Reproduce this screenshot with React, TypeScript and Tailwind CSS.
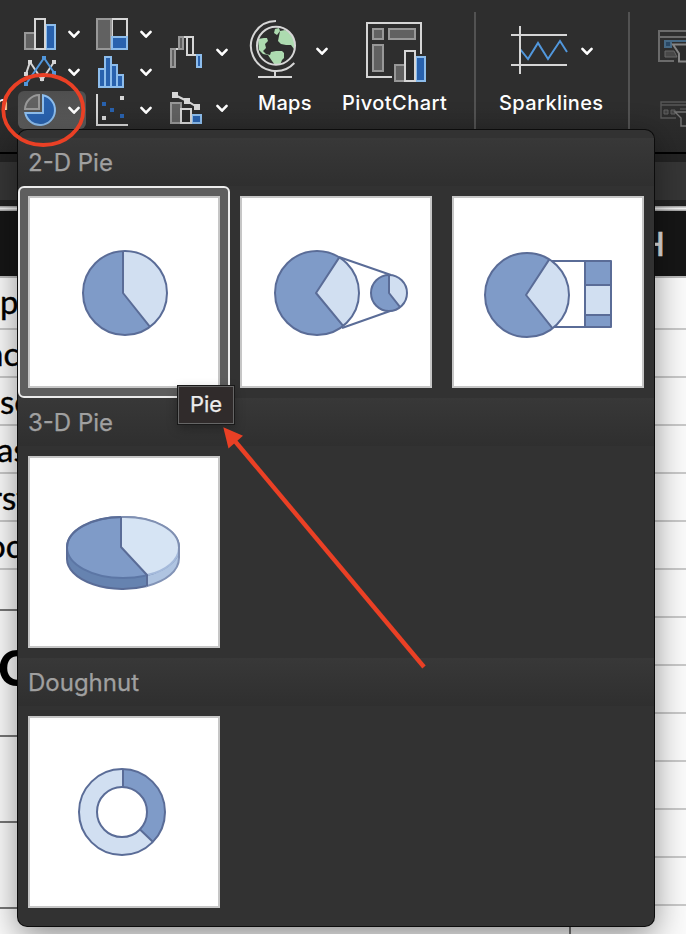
import type { ReactNode } from "react";

function Chevron() {
  return (
    <svg className="h-3 w-3.5 shrink-0" viewBox="0 0 14 12" fill="none" stroke="#fff" strokeWidth="2.6" strokeLinecap="round" strokeLinejoin="round">
      <path d="M2.4 3.9 7 8.7l4.6-4.8" />
    </svg>
  );
}

function Icon({ box, className, children }: { box: string; className: string; children: ReactNode }) {
  return (
    <svg className={"block shrink-0 overflow-visible " + className} viewBox={box} fill="none" strokeWidth="2">
      {children}
    </svg>
  );
}

function ChartButton({ box, tall, active, children }: { box: string; tall?: boolean; active?: boolean; children: ReactNode }) {
  return (
    <div
      className={
        "flex items-center justify-between rounded-md pl-1.5 pr-[5px] " +
        (tall ? "h-14 w-[70px] " : "h-[38px] w-[68px] ") +
        (active ? "bg-linear-to-b from-[#4e4e4e] to-[#5c5c5c]" : "")
      }
    >
      <Icon box={box} className="h-8 w-8">{children}</Icon>
      <Chevron />
    </div>
  );
}

const GRAY = { fill: "#616161", stroke: "#989898" };
const LIGHT = { fill: "#2b2b2b", stroke: "#d6d6d6" };
const BLUE = { fill: "#2962ae", stroke: "#8dbdec" };

function Ribbon() {
  return (
    <div className="flex h-[154px] shrink-0 border-b-2 border-black bg-linear-to-b from-[#2e2e2e] from-70% to-[#282828] text-[20px] font-medium leading-6 text-white">
      <div className="flex w-[18px] shrink-0 items-start justify-start pt-[91px]">
        <span className="-ml-[4px]">n</span>
      </div>
      <div className="w-[68px] shrink-0 pt-[15px]">
        <ChartButton box="24 18 32 32">
          <rect x="25" y="33" width="10" height="16" {...GRAY} />
          <rect x="46" y="25" width="9" height="24" {...BLUE} />
          <rect x="35" y="19" width="10" height="30" {...LIGHT} />
        </ChartButton>
        <ChartButton box="24 56 32 32">
          <path d="M26 74 30 62 42 80 54 62" stroke="#d6d6d6" />
          <path d="M26 84 44 58 55 74" stroke="#5197dc" />
          <path d="M24 72h4v4h-4zM28 60h4v4h-4zM40 77h4v4h-4zM52 60h4v4h-4z" fill="#d6d6d6" />
          <path d="M24 82h4v4h-4zM42 56h4v4h-4zM52 71h4v4h-4z" fill="#5197dc" />
        </ChartButton>
        <ChartButton box="24 94 32 32" active>
          <path d="M43 95.3A15 15 0 1 1 25.3 113H43Z" {...BLUE} />
          <path d="M39 95A14.5 14.5 0 0 0 25 109H39Z" {...GRAY} />
        </ChartButton>
      </div>
      <div className="ml-1 w-[68px] shrink-0 pt-[15px]">
        <ChartButton box="96 18 32 32">
          <rect x="112" y="19" width="15" height="30" {...LIGHT} />
          <rect x="97" y="19" width="14" height="30" {...GRAY} />
          <rect x="112" y="37" width="15" height="12" {...BLUE} />
        </ChartButton>
        <ChartButton box="96 56 32 32">
          <rect x="99" y="69" width="6" height="18" {...BLUE} />
          <rect x="111" y="65" width="6" height="22" {...BLUE} />
          <rect x="117" y="75" width="6" height="12" {...BLUE} />
          <rect x="105" y="57" width="6" height="30" {...BLUE} />
        </ChartButton>
        <ChartButton box="96 94 32 32">
          <path d="M97 94v31h31" stroke="#d6d6d6" />
          <path d="M120 96h4v4h-4zM102 116h4v4h-4z" fill="#d6d6d6" />
          <path d="M102 102h4v4h-4zM110 108h4v4h-4zM120 114h4v4h-4z" fill="#2962ae" />
        </ChartButton>
      </div>
      <div className="ml-1.5 w-[70px] shrink-0 pt-6">
        <ChartButton box="170 36 32 32" tall>
          <path d="M175 49h5M194 55h3" stroke="#d6d6d6" />
          <rect x="171" y="49" width="4" height="18" {...GRAY} />
          <rect x="179" y="37" width="4" height="12" {...GRAY} />
          <path d="M184 37h4" stroke="#d6d6d6" />
          <rect x="187" y="37" width="6" height="18" {...LIGHT} />
          <rect x="197" y="55" width="4" height="12" {...BLUE} />
        </ChartButton>
        <ChartButton box="170 92 32 32" tall>
          <rect x="171" y="103" width="10" height="20" {...GRAY} />
          <rect x="192" y="115" width="9" height="8" {...BLUE} />
          <rect x="181" y="109" width="10" height="14" {...LIGHT} />
          <path d="M175 95 187 101 197 107" stroke="#d6d6d6" />
          <path d="M172 92h6v6h-6zM184 98h6v6h-6zM194 104h6v6h-6z" fill="#d6d6d6" />
        </ChartButton>
      </div>
      <div className="ml-3.5 w-[86px] shrink-0">
        <div className="flex h-[91px] items-start justify-between pr-[5px] pt-[18px]">
          <Icon box="248 18 50 62" className="h-[62px] w-[50px]">
            <path
              d="M275 29l4-1 1 3-3 4-3-2zM280 31l5-1 5 3 4 5 1 8-1 3-3-4-3 0-2 0-5-1-3-3 1-5zM258 39l6-1 3 0 1 3-3 3 1 4-3 3 3 3 4 1 1-3 5-1 6 0 2 2 0 5-2 2-2 5-5 0-3-4-4-6-5-1-4-4z"
              fill="#addbb0"
            />
            <circle cx="276" cy="45.7" r="19" stroke="#d6d6d6" />
            <path d="M276 21A25 25 0 1 0 294.3 63M275 71v6M258 77h34" stroke="#d6d6d6" />
          </Icon>
          <div className="pt-[27px]"><Chevron /></div>
        </div>
        <div className="pl-2.5 tracking-[0.25px]">Maps</div>
      </div>
      <div className="ml-2 w-[108px] shrink-0 whitespace-nowrap">
        <div className="h-[91px] pl-6 pt-[22px]">
          <Icon box="366 22 60 60" className="h-[60px] w-[60px]">
            <path d="M392 77H367V23h54v31" stroke="#d6d6d6" />
            <rect x="373" y="29" width="10" height="10" {...GRAY} />
            <rect x="389" y="29" width="26" height="10" {...GRAY} />
            <rect x="373" y="45" width="10" height="26" {...GRAY} />
            <rect x="395" y="65" width="10" height="16" {...GRAY} />
            <rect x="416" y="57" width="9" height="24" {...BLUE} />
            <rect x="405" y="51" width="10" height="30" {...LIGHT} />
          </Icon>
        </div>
        <div className="tracking-[0.45px]">PivotChart</div>
      </div>
      <div className="ml-6 mt-3 w-0.5 shrink-0 bg-[#525252]" />
      <div className="w-[152px] shrink-0">
        <div className="flex h-[91px] items-start pl-[35px] pt-[26px]">
          <Icon box="511 26 56 48" className="h-12 w-14">
            <path d="M520 49 528 59 538 43 548 59 560 41 567 52" stroke="#5197dc" />
            <path d="M520 26v48M511 35h56M511 65h56" stroke="#d6d6d6" />
          </Icon>
          <div className="pl-[13px] pt-[19px]"><Chevron /></div>
        </div>
        <div className="pl-[23px] tracking-[0.38px]">Sparklines</div>
      </div>
      <div className="mt-3 w-0.5 shrink-0 bg-[#525252]" />
      <div className="ml-7 flex w-7 shrink-0 flex-col gap-[39px] overflow-hidden pt-[30px]">
        <Icon box="658 30 32 32" className="h-8 w-8">
          <path d="M659 31h40M659 37h40M659 30v32M658 61h16" stroke="#6b6b6b" />
          <path d="M670 41h35" stroke="#466985" />
          <path d="M665 41h6v6h-6z" fill="#294865" stroke="#466985" />
          <path d="M665 51h9l3 6h-12z" fill="#484848" stroke="#686868" strokeWidth="1" />
          <path d="M673 45h24l-9 9v8h-9v-8z" transform="translate(0 -0.5)" fill="#2b2b2b" stroke="#858585" />
        </Icon>
        <Icon box="660 101 28 26" className="ml-0.5 h-[26px] w-7">
          <path d="M676 118h-15v-16h30M661 105h30" stroke="#575757" strokeWidth="1.4" />
          <path d="M664 110h4v4h-4zM671 110h4v4h-4zM680 109h6" fill="#414141" stroke="#606060" strokeWidth="1" />
          <path d="M675 112h20l-7 6v8h-7v-8z" fill="#2b2b2b" stroke="#737373" strokeWidth="1.4" />
        </Icon>
      </div>
    </div>
  );
}

function SheetRow({ text, shift = "" }: { text: string; shift?: string }) {
  return (
    <div className="h-12 border-b-2 border-[#c9c9c9]">
      <span className={"block whitespace-nowrap text-[33px] leading-[46px] text-black [-webkit-text-stroke:0.4px_#000] " + shift}>{text}</span>
    </div>
  );
}

function Sheet() {
  return (
    <div className="flex min-h-0 flex-1 flex-col font-['Lato',sans-serif]">
      <div className="h-2 shrink-0 bg-[#232323]" />
      <div className="h-[38px] shrink-0 bg-[#363636]" />
      <div className="h-1.5 shrink-0 bg-[#232323]" />
      <div className="h-[5px] shrink-0 bg-linear-to-b from-[#999] via-[#f2f2f2] to-[#999]" />
      <div className="flex h-[65px] shrink-0 items-center justify-end bg-[#161616] pr-[21px] text-[33px] text-[#e2e2e2] [-webkit-text-stroke:0.7px_#e2e2e2]">H</div>
      <div className="flex flex-1 justify-between border-t-2 border-[#bbb] bg-[#fbfbfb]">
        <div className="w-[18px] shrink-0">
          <div className="h-[52px] border-b-2 border-[#c9c9c9] text-[33px] leading-[46px] [-webkit-text-stroke:0.4px_#000]">p</div>
          <SheetRow text="nc" shift="-ml-[15px]" />
          <SheetRow text="se" />
          <SheetRow text="as" shift="-ml-[3px]" />
          <SheetRow text="rst" shift="-ml-[10px]" />
          <SheetRow text="oc" shift="-ml-[13px]" />
          <div className="h-[41px] border-b-2 border-[#777]" />
          <div className="h-[126px] border-b-2 border-[#777] pt-[26px] text-[49px] font-black leading-[60px]">
            <span className="-ml-[2px]">C</span>
          </div>
          <div className="h-[86px] border-b-2 border-[#777]" />
          <div className="h-[86px] border-b-2 border-[#777]" />
        </div>
        <div className="ml-[551px] w-0.5 shrink-0 bg-[#777]" />
        <div className="flex-1">
          <div className="h-[52px] border-b-2 border-[#c9c9c9]" />
          {Array.from({ length: 12 }, (_, i) => (
            <SheetRow key={i} text="" />
          ))}
        </div>
      </div>
    </div>
  );
}

const EDGE = { stroke: "#5a6c97", strokeLinejoin: "round" as const };

function PieDisc({ cx, cy, r, px, py, from, to }: { cx: number; cy: number; r: number; px: number; py: number; from: number; to: number }) {
  const at = (deg: number) => {
    const a = (deg * Math.PI) / 180;
    return `${(cx + r * Math.sin(a)).toFixed(2)} ${(cy - r * Math.cos(a)).toFixed(2)}`;
  };
  return (
    <g>
      <circle cx={cx} cy={cy} r={r} fill="#7f9bc8" />
      <path d={`M${px} ${py}L${at(from)}A${r} ${r} 0 0 1 ${at(to)}Z`} fill="#d1dff1" />
      <path d={`M${at(from)}L${px} ${py}L${at(to)}`} fill="none" {...EDGE} />
      <circle cx={cx} cy={cy} r={r} fill="none" {...EDGE} />
    </g>
  );
}

function Tile({ selected, box, children }: { selected?: boolean; box: string; children: ReactNode }) {
  return (
    <div className={"h-[212px] w-[212px] shrink-0 rounded-md " + (selected ? "border-2 border-[#ededed] bg-[#5e5e5e] p-2" : "p-2.5")}>
      <div className="h-48 w-48 border-2 border-[#c6c6c6] bg-white">
        <svg className="block h-[188px] w-[188px]" viewBox={box} strokeWidth="2">{children}</svg>
      </div>
    </div>
  );
}

function Heading({ children }: { children: ReactNode }) {
  return (
    <div className="flex h-12 items-center bg-linear-to-b from-[#383838] to-[#2f2f2f] pl-2.5 pt-0.5 text-[24px] text-[#a0a0a0] [-webkit-text-stroke:0.25px_#a0a0a0]">
      {children}
    </div>
  );
}

function Gallery() {
  return (
    <div className="absolute left-[18px] top-[130px] h-[796px] w-[636px] overflow-hidden rounded-[9px] bg-[#323232] pt-2 shadow-[0_0_0_1px_#0c0c0c,0_10px_34px_rgba(0,0,0,0.45)]">
      <Heading>2-D Pie</Heading>
      <div className="flex">
        <Tile selected box="30 198 188 188">
          <PieDisc cx={125} cy={293} r={42} px={123} py={293} from={-2.7} to={143.5} />
        </Tile>
        <Tile box="242 198 188 188">
          <path d="M339 257 391 275M342 328 393 310" fill="none" {...EDGE} />
          <PieDisc cx={317} cy={293} r={42} px={316} py={293} from={32} to={141.5} />
          <PieDisc cx={389} cy={293} r={18} px={389} py={293} from={0} to={142} />
        </Tile>
        <Tile box="454 198 188 188">
          <path d="M549 261h62M552 327h59" fill="none" {...EDGE} />
          <PieDisc cx={527} cy={295} r={42} px={526} py={295} from={32} to={142.5} />
          <rect x="585" y="261" width="26" height="66" fill="#7f9bc8" {...EDGE} />
          <rect x="585" y="285" width="26" height="30" fill="#d1dff1" {...EDGE} />
        </Tile>
      </div>
      <Heading>3-D Pie</Heading>
      <Tile box="30 458 188 188">
        <path d="M67 548V559A56 30 0 0 0 147 586V575Z" fill="#6683b0" {...EDGE} />
        <path d="M147 575V586C166 581 179 571 179 558V548Z" fill="#afc4e1" stroke="#8293b6" />
        <ellipse cx="123" cy="547.5" rx="56" ry="30.5" fill="#7f9bc8" stroke="#5c76a5" />
        <path d="M121 547V517C154 516 179 530 179 547.5C179 560 166 571 147 575Z" fill="#d6e4f4" />
        <path d="M147 575C166 571 179 560 179 547.5" fill="none" stroke="#a5badb" />
        <path d="M121 517C154 516 179 530 179 547.5V558" fill="none" stroke="#8090b2" />
        <path d="M121 517V547L147 575V586" fill="none" {...EDGE} />
        <path d="M67 559V547.5C67 530 92 517 121 517" fill="none" {...EDGE} />
      </Tile>
      <Heading>Doughnut</Heading>
      <Tile box="30 718 188 188">
        <circle cx="122" cy="812" r="43" fill="#d1dff1" />
        <path d="M123 812V769A43 43 0 0 1 153 842Z" fill="#7f9bc8" />
        <path d="M123 769V788M140 829.5 152.5 841.5" {...EDGE} />
        <circle cx="122" cy="812" r="43" fill="none" {...EDGE} />
        <circle cx="122" cy="812" r="25" fill="#fff" {...EDGE} />
      </Tile>
    </div>
  );
}

export default function App() {
  return (
    <div className="relative flex h-[934px] w-[686px] flex-col overflow-hidden bg-white font-['Inter',sans-serif]">
      <Ribbon />
      <Sheet />
      <Gallery />
      <div className="absolute left-[178px] top-[386px] flex h-[38px] w-14 items-center justify-center border border-[#666] bg-[#302b2b] pb-0.5 text-[22px] text-[#ededed] shadow-[0_0_0_1px_#191919,0_4px_12px_rgba(0,0,0,0.3)] [-webkit-text-stroke:0.25px_#ededed]">
        Pie
      </div>
      <svg className="pointer-events-none absolute inset-0 h-[934px] w-[686px]" viewBox="0 0 686 934" fill="none" stroke="#ea4025">
        <ellipse cx="43.3" cy="110" rx="40" ry="35" strokeWidth="3.8" />
        <path d="M234 440 424 667" strokeWidth="4.4" />
        <path d="M223.3 427.2 243 435.8 228.5 448.5Z" fill="#ea4025" stroke="none" />
      </svg>
    </div>
  );
}
